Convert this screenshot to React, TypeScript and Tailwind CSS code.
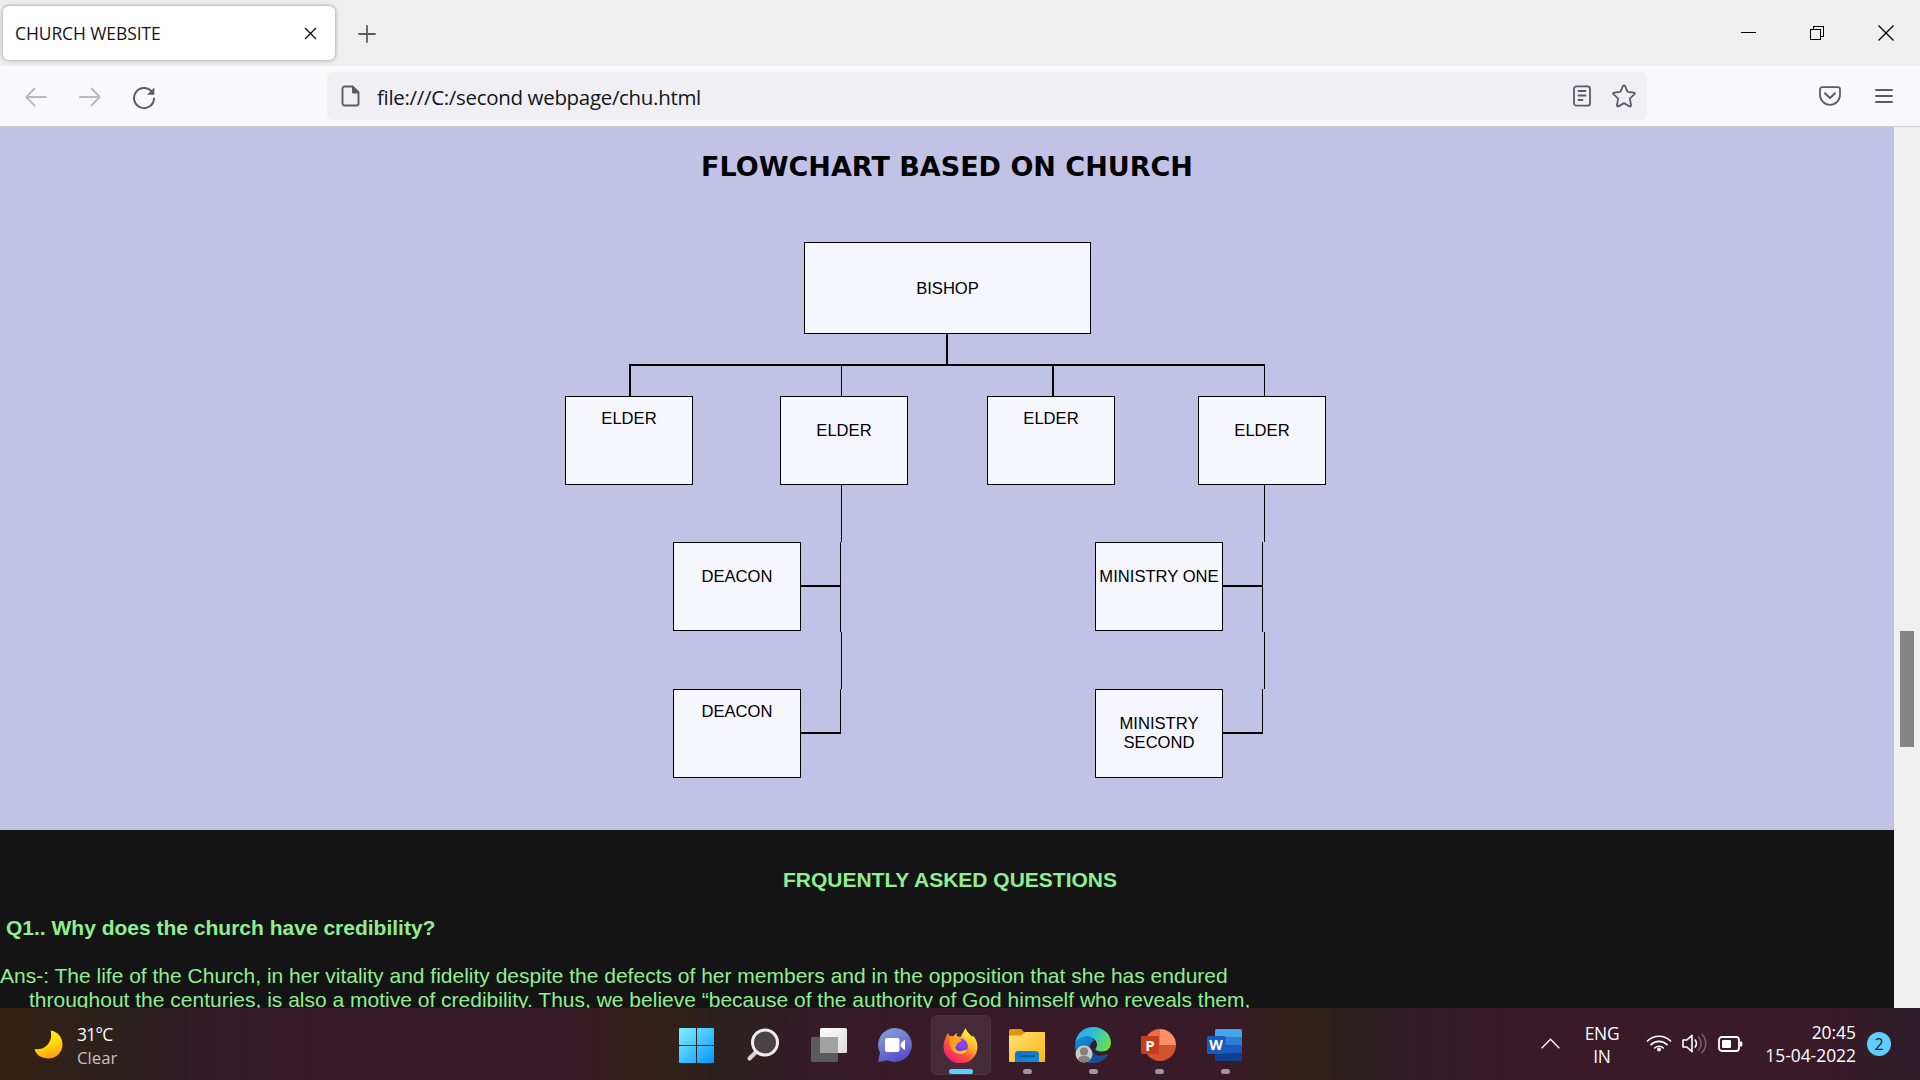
import React from "react";

type IconProps = { className?: string };

/* ---------- Browser icons ---------- */

const CloseTab = () => (
  <svg width="13" height="13" viewBox="0 0 13 13" stroke="#15141a" strokeWidth="1.4" fill="none">
    <path d="M1 1l11 11M12 1L1 12" />
  </svg>
);
const Plus = () => (
  <svg width="18" height="18" viewBox="0 0 18 18" stroke="#5b5b66" strokeWidth="1.8" strokeLinecap="round">
    <path d="M9 1v16M1 9h16" />
  </svg>
);
const Arrow = ({ className }: IconProps) => (
  <svg className={className} width="22" height="20" viewBox="0 0 22 20" stroke="#b9b9c1" strokeWidth="1.8" fill="none" strokeLinecap="round" strokeLinejoin="round">
    <path d="M21 10H1.5M9.500 1.500L1.200 10l8.300 8.500" />
  </svg>
);
const Reload = () => (
  <svg width="24" height="24" viewBox="0 0 24 24" fill="none" stroke="#5b5b66" strokeWidth="2" strokeLinecap="round">
    <path d="M20.500 6.800A10 10 0 1 0 22 12.600" />
    <path d="M22.300 1.500v7.300h-7.300z" fill="#5b5b66" stroke="none" />
  </svg>
);
const PageIcon = () => (
  <svg width="19" height="22" viewBox="0 0 19 22" fill="none">
    <path d="M3.500 1.500h8L17.500 7.500v11a2 2 0 0 1-2 2h-12a2 2 0 0 1-2-2v-15a2 2 0 0 1 2-2z" stroke="#5b5b66" strokeWidth="1.900" />
    <path d="M11 1h1.200L18 7v1.500h-5.500A1.500 1.500 0 0 1 11 7z" fill="#5b5b66" />
  </svg>
);
const Reader = () => (
  <svg width="18" height="22" viewBox="0 0 18 22" fill="none" stroke="#5b5b66" strokeWidth="1.800" strokeLinecap="round">
    <rect x="1" y="1.300" width="16" height="19.400" rx="2.500" />
    <path d="M5.500 6h7M5.500 10.500h7M5.500 15h4" />
  </svg>
);
const Star = () => (
  <svg width="24" height="24" viewBox="0 0 24 24" fill="none" stroke="#5b5b66" strokeWidth="1.800" strokeLinejoin="round">
    <path d="M11.100 1.900a1 1 0 0 1 1.800 0l2.700 5.900 6.400.8a.9.900 0 0 1 .5 1.600l-4.700 4.500 1.300 6.700a1 1 0 0 1-1.500 1L12 19.100l-5.600 3.300a1 1 0 0 1-1.500-1l1.300-6.700-4.700-4.500A.9.900 0 0 1 2 8.600l6.400-.8z" />
  </svg>
);
const Pocket = () => (
  <svg width="22" height="20" viewBox="0 0 22 20" fill="none" stroke="#5b5b66" strokeWidth="1.800" strokeLinecap="round" strokeLinejoin="round">
    <path d="M3.200 1.200h15.600A2.200 2.200 0 0 1 21 3.400V8.800a10 10 0 0 1-20 0V3.400A2.200 2.200 0 0 1 3.200 1.200z" />
    <path d="M6 7.300l5 4.700 5-4.700" strokeWidth="2" />
  </svg>
);
const Menu = () => (
  <svg width="18" height="16" viewBox="0 0 18 16" stroke="#5b5b66" strokeWidth="1.800" strokeLinecap="round">
    <path d="M1 2h16M1 8h16M1 14h16" />
  </svg>
);

/* ---------- Taskbar icons ---------- */

const WindowsLogo = () => (
  <svg width="35" height="35" viewBox="0 0 35 35">
    <defs>
      <linearGradient id="win" gradientUnits="userSpaceOnUse" x1="0" y1="0" x2="35" y2="35">
        <stop offset="0" stopColor="#7ff2fe" />
        <stop offset="1" stopColor="#0595fb" />
      </linearGradient>
    </defs>
    <path fill="url(#win)" d="M1 0h16v17H0V1a1 1 0 0 1 1-1zM18 0h16a1 1 0 0 1 1 1v16H18zM0 18h17v17H1a1 1 0 0 1-1-1zM18 18h17v16a1 1 0 0 1-1 1H18z" />
  </svg>
);
const SearchIcon = () => (
  <svg width="36" height="36" viewBox="0 0 36 36" fill="none">
    <path d="M12 24L4.500 31.500" stroke="#d6d6d8" strokeWidth="4.200" strokeLinecap="round" />
    <circle cx="20" cy="15.500" r="12.500" fill="#4a4244" stroke="#eeeeef" strokeWidth="3" />
  </svg>
);
const TaskView = () => (
  <svg width="36" height="34" viewBox="0 0 36 34">
    <defs>
      <linearGradient id="tv" x1="0" y1="0" x2="1" y2="1">
        <stop offset="0" stopColor="#fff" />
        <stop offset="1" stopColor="#dcdcdc" />
      </linearGradient>
    </defs>
    <rect y="9" width="27" height="25" rx="1.500" fill="#5c5b5c" />
    <rect x="9" width="27" height="25" rx="1.500" fill="url(#tv)" />
    <path d="M9 9h18v16H10.500A1.500 1.500 0 0 1 9 23.500z" fill="#a3a2a3" />
  </svg>
);
const Chat = () => (
  <svg width="34" height="34" viewBox="0 0 34 34">
    <defs>
      <linearGradient id="chat" x1="0.200" y1="0" x2="0.600" y2="1">
        <stop offset="0" stopColor="#7ea0dc" />
        <stop offset="0.500" stopColor="#7377d2" />
        <stop offset="1" stopColor="#4f4fc4" />
      </linearGradient>
    </defs>
    <path fill="url(#chat)" d="M17 0a17 17 0 1 1-7.500 32.300L1.500 34c-1 .2-1.500-.6-1.200-1.500L2 25A17 17 0 0 1 17 0z" />
    <rect x="7" y="10" width="14.500" height="14" rx="2" fill="#fff" />
    <path d="M22.800 15.500l3.200-3.200c.5-.5 1-.3 1 .4v8.600c0 .7-.5.900-1 .4l-3.200-3.200z" fill="#fff" />
  </svg>
);
const Firefox = () => (
  <svg width="35" height="35" viewBox="0 0 35 35">
    <defs>
      <linearGradient id="ffA" x1="0.850" y1="0.100" x2="0.200" y2="0.950">
        <stop offset="0" stopColor="#fff44f" />
        <stop offset="0.350" stopColor="#ffb02a" />
        <stop offset="0.600" stopColor="#ff5a34" />
        <stop offset="1" stopColor="#f0157a" />
      </linearGradient>
      <radialGradient id="ffB" cx="0.650" cy="0.300" r="0.800">
        <stop offset="0" stopColor="#a53df5" />
        <stop offset="1" stopColor="#4b4bd2" />
      </radialGradient>
      <linearGradient id="ffC" x1="0" y1="0" x2="1" y2="0.600">
        <stop offset="0" stopColor="#ff8a1c" />
        <stop offset="1" stopColor="#ffc928" />
      </linearGradient>
      <linearGradient id="ffD" x1="0.500" y1="0" x2="0.500" y2="1">
        <stop offset="0" stopColor="#fff04c" />
        <stop offset="0.600" stopColor="#ffc526" />
        <stop offset="1" stopColor="#ff8a2a" stopOpacity="0" />
      </linearGradient>
    </defs>
    <path fill="url(#ffA)" d="M5 5c.3 1.500 1 2.600 2 3.300 1.300-.5 2.700-.5 3.700-.2C11.500 6.600 13 5.500 14.500 5c-.8 1-1 2.200-.6 3.300L17.500 9 20 4.500 22.500.300c.5 2.800 3 4.700 5.500 7.500.5.400 1 .9 1.300 1.500.3-.8.300-1.600.1-2.300 3.200 3.200 5.100 7.200 5.100 11.700A17 17 0 0 1 .500 18.500c0-3 .6-5.600 2-8C2.800 8.500 3.700 6.700 5 5z" />
    <path fill="url(#ffD)" d="M22.500.300c.5 2.800 3 4.700 5.500 7.500 3.500 4 4.200 10.500 1 15.500-2 2.500-5 3-7 1 3-3.500 3-9 .5-12.300C20.500 9 19.500 6 22.500.300z" />
    <circle cx="17.300" cy="18" r="7.600" fill="url(#ffB)" />
    <path fill="url(#ffC)" d="M6.500 9.500c2.500-1.300 5-1 6.900.5 1.400.9 4.200 1.100 5.300 1.800-.5 2-3.800 2.500-4.700 4.100-.5 1-.5 2.500-2 3 .5 3 3.500 4.700 6.500 4.200 2.500-.4 3.500-1.500 5.500-1.200-1.700 3.500-5.500 4.700-9.300 3.700C8 23.900 5 16.500 6.500 9.500z" />
  </svg>
);
const Folder = () => (
  <svg width="36" height="33" viewBox="0 0 36 33">
    <defs>
      <linearGradient id="fo" x1="0" y1="0" x2="1" y2="1">
        <stop offset="0" stopColor="#ffdf7b" />
        <stop offset="1" stopColor="#fbb90f" />
      </linearGradient>
      <linearGradient id="fb" x1="0" y1="0" x2="1" y2="1">
        <stop offset="0" stopColor="#0e72c4" />
        <stop offset="1" stopColor="#0b8fdf" />
      </linearGradient>
    </defs>
    <path d="M1.500 0H11c1 0 1.500.3 2.200 1L16 4v6H0V1.500A1.500 1.500 0 0 1 1.500 0z" fill="#dd9a05" />
    <path d="M0 6.500h12.500L16 3h19a1 1 0 0 1 1 1v28a1 1 0 0 1-1 1H1a1 1 0 0 1-1-1z" fill="url(#fo)" />
    <path d="M6 33v-7.500A3.500 3.500 0 0 1 9.500 22h17a3.500 3.500 0 0 1 3.500 3.500V33z" fill="url(#fb)" />
    <path d="M11 27.200h14" stroke="#0a4f92" strokeWidth="1.800" strokeLinecap="round" />
  </svg>
);
const Edge = () => (
  <svg width="36" height="36" viewBox="0 0 36 36">
    <defs>
      <linearGradient id="egA" x1="0" y1="0.300" x2="1" y2="0.600">
        <stop offset="0" stopColor="#2fa8ec" />
        <stop offset="0.450" stopColor="#2bc0d4" />
        <stop offset="1" stopColor="#6fe04a" />
      </linearGradient>
      <linearGradient id="egB" x1="0" y1="0" x2="0.600" y2="1">
        <stop offset="0" stopColor="#1592e0" />
        <stop offset="1" stopColor="#0c59a4" />
      </linearGradient>
    </defs>
    <path d="M0 17C1 6.500 9 0 18 0c10 0 18 7 18 15.500 0 6-4.300 9-9 9-4 0-6.500-1.200-6.500-2.500 0-1 1.500-1.500 1.500-4.500 0-4-4-7.500-9.500-7.500C6.500 10 1.500 13 0 17z" fill="url(#egA)" />
    <path d="M12.500 9C5.500 9 .500 13.500 0 18.500 0 28 8 36 18 36c6 0 11.500-3 14.500-7.500.5-.8-.2-1.300-1-1C24 31 15 27 15 20c0-3 1.500-5 4-6.500C17.500 10.500 15.500 9 12.500 9z" fill="url(#egB)" />
    <path d="M12 22c-1 7 4 13.500 9.500 13.800 4.500-.5 8.500-3 11-7.300.5-.8-.2-1.300-1-1C24 31 15 28 15 20c-2 0-3 1-3 2z" fill="#174f93" />
    <circle cx="9" cy="27" r="8.500" fill="#cbc9c7" />
    <circle cx="9" cy="24.500" r="4" fill="#83807e" />
    <path d="M3 33c.5-3.500 3-4 6-4s5.500.5 6 4a8.500 8.500 0 0 1-12 0z" fill="#83807e" />
  </svg>
);
const PowerPoint = () => (
  <div className="relative h-8 w-[35px]">
    <svg width="35" height="32" viewBox="0 0 35 32">
      <path d="M19 16V0a16 16 0 0 0-16 16z" fill="#ed6c47" />
      <path d="M19 0a16 16 0 0 1 16 16H19z" fill="#ff8f6b" />
      <path d="M3 16a16 16 0 0 0 32 0z" fill="#d35230" />
      <rect x="0" y="7" width="18" height="18" rx="1.500" fill="#c43e1c" />
    </svg>
    <span className="absolute left-0 top-[7px] w-[18px] text-center font-['Open_Sans'] text-[15px] font-bold leading-[18px] text-white">P</span>
  </div>
);
const Word = () => (
  <div className="relative h-8 w-[35px]">
    <svg width="35" height="32" viewBox="0 0 35 32">
      <path d="M9.500 0h24A1.500 1.500 0 0 1 35 1.500V8H8V1.500A1.500 1.500 0 0 1 9.500 0z" fill="#41a5ee" />
      <path d="M8 8h27v8H8z" fill="#2b7cd3" />
      <path d="M8 16h27v8H8z" fill="#185abd" />
      <path d="M8 24h27v6.500a1.500 1.500 0 0 1-1.500 1.500h-24A1.500 1.500 0 0 1 8 30.500z" fill="#103f91" />
      <rect x="0" y="7" width="18.500" height="18" rx="1.500" fill="#185abd" />
    </svg>
    <span className="absolute left-0 top-[7px] w-[18px] text-center font-['Open_Sans'] text-[14px] font-bold leading-[18px] text-white">W</span>
  </div>
);
const Moon = () => (
  <svg width="29" height="29" viewBox="0 0 29 29">
    <defs>
      <linearGradient id="moon" x1="0.300" y1="0" x2="0.600" y2="1">
        <stop offset="0" stopColor="#fff01a" />
        <stop offset="0.500" stopColor="#ffd90c" />
        <stop offset="1" stopColor="#ff9d14" />
      </linearGradient>
    </defs>
    <path d="M16.500.500C24 1.500 28.500 7.500 28.500 14.500a14 14 0 0 1-14 14C7.500 28.500 2 25 .500 19c3 .8 8.500.3 12.300-3.500C17 11.500 18 5 16.500.500z" fill="url(#moon)" />
  </svg>
);
const Chevron = () => (
  <svg width="19" height="11" viewBox="0 0 19 11" fill="none" stroke="#fff" strokeWidth="1.300">
    <path d="M.700 10.300L9.500 1.200l8.800 9.100" />
  </svg>
);
const Wifi = () => (
  <svg width="26" height="18" viewBox="0 0 26 18" fill="none" stroke="#fff" strokeWidth="1.700" strokeLinecap="round">
    <path d="M1.500 7a16.300 16.300 0 0 1 23 0M5 10.700a11.300 11.300 0 0 1 16 0M8.700 14a6.200 6.200 0 0 1 8.600 0" />
    <circle cx="13" cy="15.500" r="2" fill="#fff" stroke="none" />
  </svg>
);
const Volume = () => (
  <svg width="25" height="21" viewBox="0 0 25 21" fill="none" stroke="#fff" strokeWidth="1.600" strokeLinecap="round" strokeLinejoin="round">
    <path d="M1 7h3.800l5.200-4.700v16.400L4.800 14H1z" />
    <path d="M13.200 7a6 6 0 0 1 0 7" />
    <path d="M16.500 4a9.500 9.500 0 0 1 0 13M20 1.300a13.300 13.300 0 0 1 0 18.400" stroke="#75636c" />
  </svg>
);
const Battery = () => (
  <svg width="25" height="16" viewBox="0 0 25 16" fill="none">
    <rect x="1" y="1" width="20" height="14" rx="3" stroke="#fff" strokeWidth="1.800" />
    <rect x="4" y="4" width="9" height="8" rx="1" fill="#fff" />
    <path d="M22 5.500h1.300a1 1 0 0 1 1 1v3a1 1 0 0 1-1 1H22z" fill="#fff" />
  </svg>
);

/* ---------- Flowchart ---------- */

type FlowNode = { label: string; box: string };

const nodes: FlowNode[] = [
  { label: "BISHOP", box: "left-[804px] top-[115px] h-[92px] w-[287px] pt-[36px]" },
  { label: "ELDER", box: "left-[565px] top-[269px] h-[89px] w-32 pt-[12px]" },
  { label: "ELDER", box: "left-[780px] top-[269px] h-[89px] w-32 pt-[24px]" },
  { label: "ELDER", box: "left-[987px] top-[269px] h-[89px] w-32 pt-[12px]" },
  { label: "ELDER", box: "left-[1198px] top-[269px] h-[89px] w-32 pt-[24px]" },
  { label: "DEACON", box: "left-[673px] top-[415px] h-[89px] w-32 pt-[24px]" },
  { label: "DEACON", box: "left-[673px] top-[562px] h-[89px] w-32 pt-[12px]" },
  { label: "MINISTRY ONE", box: "left-[1095px] top-[415px] h-[89px] w-32 pt-[24px]" },
  { label: "MINISTRY SECOND", box: "left-[1095px] top-[562px] h-[89px] w-32 px-4 pt-[24px]" },
];

/* x, y, width, height of each connector segment */
const segments: [number, number, number, number][] = [
  [946, 207, 2, 31],
  [629, 237, 636, 2],
  [629, 237, 2, 32],
  [841, 238, 1, 31],
  [1052, 237, 2, 32],
  [1264, 237, 1, 32],
  [841, 358, 1, 57],
  [840, 415, 1, 90],
  [841, 505, 1, 57],
  [840, 562, 1, 45],
  [801, 458, 40, 2],
  [801, 605, 40, 2],
  [1264, 358, 1, 57],
  [1262, 415, 1, 90],
  [1264, 505, 1, 57],
  [1262, 562, 1, 45],
  [1223, 458, 40, 2],
  [1223, 605, 40, 2],
];

const Flowchart = () => (
  <section className="relative h-[703px] shrink-0 bg-[#c2c2e6]">
    <h1 className="pt-6 text-center font-['DejaVu_Sans'] text-[27px] font-bold leading-8 text-black">
      FLOWCHART BASED ON CHURCH
    </h1>
    <svg className="absolute left-0 top-0" width="1894" height="703" shapeRendering="crispEdges">
      {segments.map(([x, y, w, h], i) => (
        <rect key={i} x={x} y={y} width={w} height={h} fill="#000" />
      ))}
    </svg>
    {nodes.map((n, i) => (
      <div key={i} className={`absolute border border-black bg-[#f6f6ff] text-center text-[16.600px] leading-[19px] text-black ${n.box}`}>
        {n.label}
      </div>
    ))}
  </section>
);

const Faq = () => (
  <section className="min-h-0 flex-1 overflow-hidden bg-[#141414] text-[21px] leading-6 text-[#90ee90]">
    <h2 className="mt-[38px] pl-[6px] text-center font-bold">FRQUENTLY ASKED QUESTIONS</h2>
    <h3 className="mt-6 pl-[6px] font-bold">Q1.. Why does the church have credibility?</h3>
    <p className="mt-6 whitespace-nowrap">
      Ans-: The life of the Church, in her vitality and fidelity despite the defects of her members and in the opposition that she has endured
      <br />
      <span className="pl-[29px]">throughout the centuries, is also a motive of credibility. Thus, we believe “because of the authority of God himself who reveals them,</span>
    </p>
  </section>
);

/* ---------- Taskbar ---------- */

const apps = [
  { icon: <WindowsLogo />, state: "none" },
  { icon: <SearchIcon />, state: "none" },
  { icon: <TaskView />, state: "none" },
  { icon: <Chat />, state: "none" },
  { icon: <Firefox />, state: "active" },
  { icon: <Folder />, state: "open" },
  { icon: <Edge />, state: "open" },
  { icon: <PowerPoint />, state: "open" },
  { icon: <Word />, state: "open" },
];

const Taskbar = () => (
  <footer className="flex h-[72px] shrink-0 items-start bg-[linear-gradient(90deg,#38210f_0px,#30211a_60px,#2a211f_125px,#341c27_200px,#381a29_330px,#381a29_560px,#351e1c_625px,#33201a_665px,#2a2120_730px,#341c27_800px,#381a29_900px,#381a29_1220px,#35201b_1285px,#31211a_1320px,#2a2120_1350px,#341c27_1420px,#381a29_1520px,#381a29_1830px,#2d1e28_1920px)] font-['Open_Sans'] text-[17.400px] text-white">
    <div className="flex w-[667px] pl-[34px] pt-[22px]">
      <Moon />
      <div className="-mt-[8px] ml-[14px] leading-6">
        <div className="tracking-[-0.700px]">31°C</div>
        <div className="text-[16.800px] text-[#c8c0c4]">Clear</div>
      </div>
    </div>
    <div className="flex gap-[6px] pt-[7px]">
      {apps.map((a, i) => (
        <div
          key={i}
          className={
            a.state === "active"
              ? "flex h-[60px] w-[60px] flex-col items-center rounded-md border border-[#4d3441] bg-[#452a38]"
              : "flex h-[60px] w-[60px] flex-col items-center border border-transparent"
          }
        >
          <div className="flex h-[53px] w-full items-center justify-center pb-[1px] pt-[6px]">
            <div className="-ml-px">{a.icon}</div>
          </div>
          {a.state === "active" && <div className="h-[5px] w-6 shrink-0 rounded-full bg-[#60cdff]" />}
          {a.state === "open" && <div className="h-[5px] w-[9px] shrink-0 rounded-full bg-[#a3949c]" />}
        </div>
      ))}
    </div>
    <div className="ml-auto flex items-start pr-[29px]">
      <div className="mr-[24px] pt-[30px]"><Chevron /></div>
      <div className="mr-[26px] w-[36px] pt-[14px] text-center leading-[23px] tracking-[-0.300px]">
        <div>ENG</div>
        <div>IN</div>
      </div>
      <div className="mr-[10px] pt-[26px]"><Wifi /></div>
      <div className="mr-[11px] pt-[25px]"><Volume /></div>
      <div className="mr-[20px] pt-[28px]"><Battery /></div>
      <div className="mr-[11px] w-[93px] whitespace-nowrap pt-[13px] text-right leading-[23px]">
        <div>20:45</div>
        <div>15-04-2022</div>
      </div>
      <div className="mt-6 flex h-6 w-6 items-center justify-center rounded-full bg-[#60cdff] text-[16px] leading-none text-[#1a1a1a]">2</div>
    </div>
  </footer>
);

/* ---------- Browser chrome ---------- */

const TabStrip = () => (
  <div className="flex h-[66px] shrink-0 items-start bg-[#efefef]">
    <div className="ml-[3px] mt-[6px] flex h-[54px] w-[332px] items-center justify-between rounded-md bg-white pl-3 pr-[18px] shadow-[0_0_4px_rgba(0,0,0,0.400)]">
      <span className="font-['Open_Sans'] text-[17.500px] leading-6 tracking-[-0.100px] text-[#15141a]">CHURCH WEBSITE</span>
      <CloseTab />
    </div>
    <div className="ml-[23px] mt-[25px]"><Plus /></div>
    <div className="ml-auto flex items-center pr-[26px] pt-[25px]">
      <svg width="15" height="16" viewBox="0 0 15 16" shapeRendering="crispEdges">
        <path d="M0 7.500h15" stroke="#000" />
      </svg>
      <svg className="ml-[54px]" width="14" height="16" viewBox="0 0 14 16" fill="none" stroke="#000" shapeRendering="crispEdges">
        <path d="M.500 4.500h10v10h-10zM3.500 4v-2.500h10v10h-3" />
      </svg>
      <svg className="ml-[54px]" width="16" height="16" viewBox="0 0 16 16" fill="none" stroke="#000" strokeWidth="1.300">
        <path d="M.500.500l15 15M15.500.500l-15 15" />
      </svg>
    </div>
  </div>
);

const Toolbar = () => (
  <div className="flex h-[61px] shrink-0 items-start border-b border-[#cccccc] bg-[#f9f9fb]">
    <div className="flex w-[327px] gap-8 pl-[25px] pt-[21px]">
      <Arrow />
      <Arrow className="rotate-180" />
      <div className="-ml-px -mt-px"><Reload /></div>
    </div>
    <div className="mt-[6px] flex h-12 w-[1320px] items-center rounded-md bg-[#f0f0f4] pl-[14px] pr-[11px]">
      <PageIcon />
      <span className="ml-[17px] pt-[2px] font-['Open_Sans'] text-[20.500px] leading-6 tracking-[-0.320px] text-[#15141a]">
        file:///C:/second webpage/chu.html
      </span>
      <div className="ml-auto flex items-center gap-[21px]">
        <Reader />
        <Star />
      </div>
    </div>
    <div className="ml-auto flex items-center gap-[34px] pr-[27px] pt-5">
      <Pocket />
      <Menu />
    </div>
  </div>
);

export default function App() {
  return (
    <div className="flex h-[1080px] w-[1920px] flex-col overflow-hidden font-['Liberation_Sans',Arial,sans-serif]">
      <TabStrip />
      <Toolbar />
      <div className="flex min-h-0 flex-1">
        <main className="flex w-[1894px] flex-col overflow-hidden">
          <Flowchart />
          <Faq />
        </main>
        <div className="w-[26px] bg-[#f0f0f0] pl-[6px] pt-[504px]">
          <div className="h-[116px] w-[14px] bg-[#858585]" />
        </div>
      </div>
      <Taskbar />
    </div>
  );
}
